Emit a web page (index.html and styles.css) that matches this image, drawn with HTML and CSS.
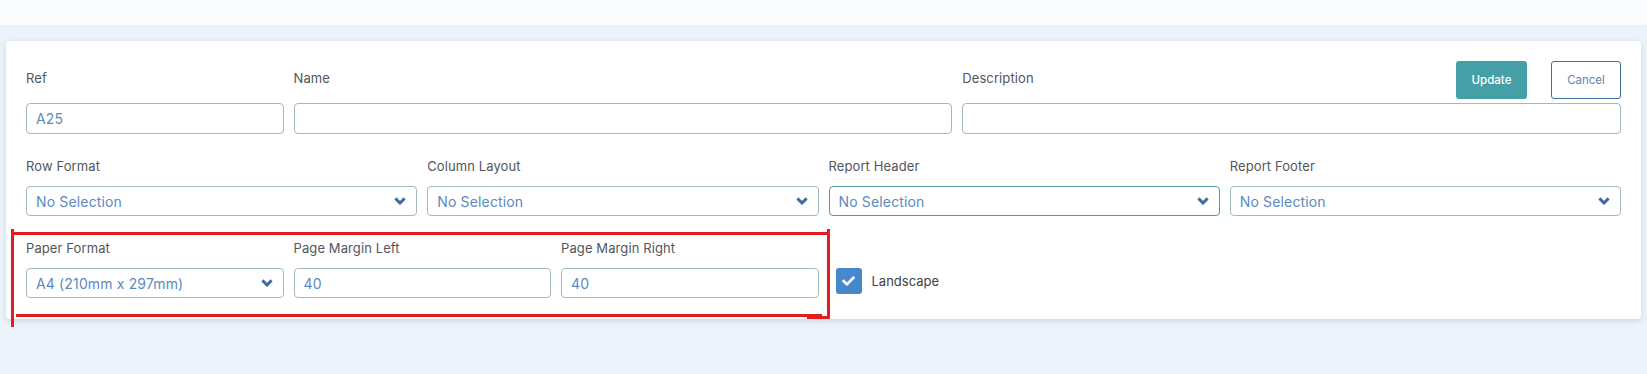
FILE: index.html
```html
<!DOCTYPE html>
<html>
	<head>
		<title>Report Layout</title>
		<link rel="stylesheet" href="styles.css">
	</head>
	<body>
		<div id="top-bar"></div>
		<div id="page">
			<div id="card">
				<!-- row 1 -->
				<div class="form-row first-row">
					<div class="field span-2">
						<div class="field-head">
							<span class="field-label">Ref</span>
						</div>
						<div class="input has-value">A25</div>
					</div>
					<div class="field span-5">
						<div class="field-head">
							<span class="field-label">Name</span>
						</div>
						<div class="input"></div>
					</div>
					<div class="field span-5">
						<div class="field-head">
							<span class="field-label">Description</span>
							<div class="buttons">
								<button type="button" class="btn btn-update">Update</button>
								<button type="button" class="btn btn-cancel">Cancel</button>
							</div>
						</div>
						<div class="input"></div>
					</div>
				</div>

				<!-- row 2 -->
				<div class="form-row">
					<div class="field span-3">
						<span class="field-label">Row Format</span>
						<div class="input select">
							<span>No Selection</span>
							<svg class="chevron" viewBox="0 0 12 8"><polyline points="1.4,1.4 6,6 10.6,1.4"/></svg>
						</div>
					</div>
					<div class="field span-3">
						<span class="field-label">Column Layout</span>
						<div class="input select">
							<span>No Selection</span>
							<svg class="chevron" viewBox="0 0 12 8"><polyline points="1.4,1.4 6,6 10.6,1.4"/></svg>
						</div>
					</div>
					<div class="field span-3">
						<span class="field-label">Report Header</span>
						<div class="input select focused">
							<span>No Selection</span>
							<svg class="chevron" viewBox="0 0 12 8"><polyline points="1.4,1.4 6,6 10.6,1.4"/></svg>
						</div>
					</div>
					<div class="field span-3">
						<span class="field-label">Report Footer</span>
						<div class="input select">
							<span>No Selection</span>
							<svg class="chevron" viewBox="0 0 12 8"><polyline points="1.4,1.4 6,6 10.6,1.4"/></svg>
						</div>
					</div>
				</div>

				<!-- row 3 -->
				<div class="form-row">
					<div class="field span-2">
						<span class="field-label">Paper Format</span>
						<div class="input select">
							<span>A4 (210mm x 297mm)</span>
							<svg class="chevron" viewBox="0 0 12 8"><polyline points="1.4,1.4 6,6 10.6,1.4"/></svg>
						</div>
					</div>
					<div class="field span-2">
						<span class="field-label">Page Margin Left</span>
						<div class="input has-value">40</div>
					</div>
					<div class="field span-2">
						<span class="field-label">Page Margin Right</span>
						<div class="input has-value">40</div>
					</div>
					<div class="field span-2 check-field">
						<div class="check-line">
							<span class="checkbox">
								<svg viewBox="0 64 512 384"><path d="M173.898 439.404l-166.4-166.4c-9.997-9.997-9.997-26.206 0-36.204l36.203-36.204c9.997-9.998 26.207-9.998 36.204 0L192 312.69 432.095 72.596c9.997-9.997 26.207-9.997 36.204 0l36.203 36.204c9.997 9.997 9.997 26.206 0 36.204l-294.4 294.401c-9.998 9.997-26.207 9.997-36.204-.001z"/></svg>
							</span>
							<span class="check-label">Landscape</span>
						</div>
					</div>
				</div>
			</div>

			<!-- red annotation drawn over the screenshot -->
			<div class="mark mark-top"></div>
			<div class="mark mark-left"></div>
			<div class="mark mark-right"></div>
			<div class="mark mark-bottom"></div>
			<div class="mark mark-tail"></div>
		</div>
	</body>
</html>
```

FILE: styles.css
```css
html {
	height: 100%;
}

body {
	font-family: "Inter", "Open Sans", sans-serif;
	margin: 0;
	height: 100%;
	background-color: rgb(237, 243, 250);
	color: rgb(85, 88, 94);
}

#top-bar {
	height: 25px;
	background-color: rgb(250, 251, 252);
}

#page {
	position: relative;
	padding: 16px 6px 0 6px;
}

#card {
	background-color: #fff;
	border-radius: 4px;
	box-shadow: 0 2px 6px 0 rgba(60, 80, 110, 0.18);
	padding: 20px 20px 21px 20px;
	display: flex;
	flex-direction: column;
	gap: 22px;
}

.form-row {
	display: grid;
	grid-template-columns: repeat(12, 1fr);
	column-gap: 10px;
}

.span-2 {
	grid-column: span 2;
}

.span-3 {
	grid-column: span 3;
}

.span-5 {
	grid-column: span 5;
}

.field {
	display: flex;
	flex-direction: column;
}

.field-head {
	height: 38px;
	margin-bottom: 4px;
	display: flex;
	align-items: center;
	justify-content: space-between;
}

.field-label {
	font-size: 13px;
	line-height: 20px;
	margin-bottom: 10px;
	color: rgb(82, 86, 92);
	letter-spacing: 0.1px;
}

.field-head .field-label {
	margin-bottom: 0;
	padding-bottom: 5px;
}

.input {
	box-sizing: border-box;
	height: 30px;
	border: 1px solid rgb(160, 186, 190);
	border-radius: 4px;
	padding: 0 9px;
	font-size: 14px;
	color: rgb(92, 138, 192);
	display: flex;
	align-items: center;
	letter-spacing: 0.15px;
}

.first-row .input {
	height: 31px;
}

.select {
	justify-content: space-between;
}

.focused {
	border-color: rgb(78, 154, 162);
}

.chevron {
	width: 12px;
	height: 8px;
	margin-right: 1px;
	fill: none;
	stroke: rgb(62, 107, 160);
	stroke-width: 2.9;
	stroke-linejoin: miter;
}

.buttons {
	display: flex;
	gap: 24px;
}

.btn {
	box-sizing: border-box;
	height: 38px;
	width: 71px;
	border-radius: 3px;
	font-family: "Inter", "Open Sans", sans-serif;
	font-size: 11.5px;
	padding: 0;
}

.btn-update {
	background-color: rgb(68, 159, 167);
	border: none;
	color: #fff;
	font-weight: 500;
}

.btn-cancel {
	background-color: #fff;
	border: 1px solid rgb(66, 108, 164);
	color: rgb(100, 132, 178);
	width: 70px;
}

.check-field {
	padding-top: 30px;
}

.check-line {
	display: flex;
	align-items: center;
	gap: 10px;
	padding-left: 7px;
}

.checkbox {
	width: 26px;
	height: 26px;
	border-radius: 3px;
	background-color: rgb(69, 136, 204);
	display: flex;
	align-items: center;
	justify-content: center;
}

.checkbox svg {
	width: 13px;
	height: 10px;
	fill: #fff;
}

.check-label {
	font-size: 13px;
	color: rgb(64, 66, 72);
}

/* annotation */
.mark {
	position: absolute;
	background-color: rgb(226, 28, 33);
}

.mark-top {
	left: 12px;
	top: 207px;
	width: 817px;
	height: 3px;
}

.mark-left {
	left: 11px;
	top: 204px;
	width: 3px;
	height: 98px;
}

.mark-right {
	left: 827px;
	top: 204px;
	width: 3px;
	height: 90px;
}

.mark-bottom {
	left: 16px;
	top: 289px;
	width: 806px;
	height: 2.5px;
}

.mark-tail {
	left: 807px;
	top: 291px;
	width: 23px;
	height: 3px;
}
```
